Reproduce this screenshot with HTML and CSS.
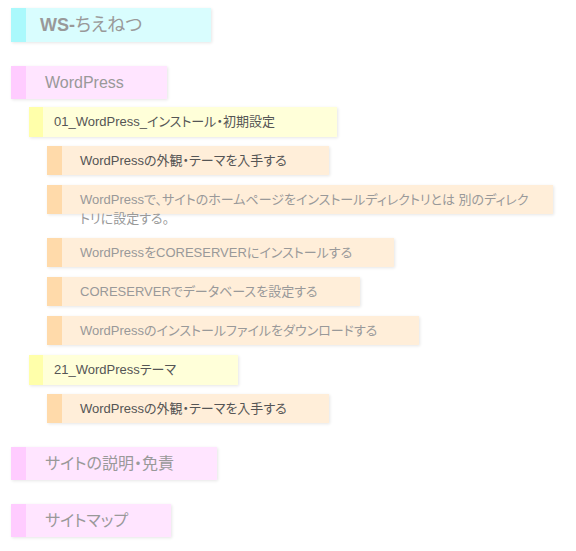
FILE: index.html
```html
<!DOCTYPE html>
<html lang="ja">
<head>
  <meta charset="UTF-8">
  <meta name="viewport" content="width=device-width, initial-scale=1">
  <title>WS-ちえねつ</title>
  <link rel="stylesheet" href="styles.css">
</head>
<body>
  <div class="page">
    <h1 class="site-title"><b>WS-</b>ちえねつ</h1>

    <ul class="tree">
      <li class="cat">
        <a class="box box-cat" href="#">WordPress</a>
        <ul class="subs">
          <li class="sub">
            <a class="box box-sub" href="#">01_WordPress_インストール・初期設定</a>
            <ul class="leaves">
              <li><a class="box box-leaf current" href="#">WordPressの外観・テーマを入手する</a></li>
              <li><a class="box box-leaf long" href="#">WordPressで、サイトのホームページをインストールディレクトリとは 別のディレクトリに設定する。</a></li>
              <li><a class="box box-leaf" href="#">WordPressをCORESERVERにインストールする</a></li>
              <li><a class="box box-leaf" href="#">CORESERVERでデータベースを設定する</a></li>
              <li><a class="box box-leaf" href="#">WordPressのインストールファイルをダウンロードする</a></li>
            </ul>
          </li>
          <li class="sub">
            <a class="box box-sub" href="#">21_WordPressテーマ</a>
            <ul class="leaves">
              <li><a class="box box-leaf current" href="#">WordPressの外観・テーマを入手する</a></li>
            </ul>
          </li>
        </ul>
      </li>
      <li class="cat">
        <a class="box box-cat" href="#">サイトの説明・免責</a>
      </li>
      <li class="cat">
        <a class="box box-cat" href="#">サイトマップ</a>
      </li>
    </ul>
  </div>
</body>
</html>
```

FILE: styles.css
```css
/* 全体 */
* {
  box-sizing: border-box;
  margin: 0;
  padding: 0;
}
body {
  font-family: "Liberation Sans", "Noto Sans CJK JP", sans-serif;
  font-feature-settings: "palt";
  color: #999;
  background: #fff;
}
.page {
  padding: 8px 11px;
}
a {
  text-decoration: none;
  color: inherit;
}
ul {
  list-style: none;
}

/* 共通の箱 */
.box {
  display: inline-block;
  box-shadow: 1px 1px 3px rgba(0, 0, 0, 0.1);
}

/* サイト名 */
.site-title {
  display: inline-block;
  height: 34px;
  padding: 6px 69px 0 14px;
  font-size: 18px;
  font-weight: normal;
  line-height: 22px;
  background: #d9fdfe;
  border-left: 15px solid #aaf9fc;
  box-shadow: 1px 1px 3px rgba(0, 0, 0, 0.1);
  margin-bottom: 24px;
}
.site-title b {
  font-weight: bold;
}

/* カテゴリ */
.tree {
  display: flex;
  flex-direction: column;
  align-items: flex-start;
  gap: 24px;
}
.cat {
  display: flex;
  flex-direction: column;
  align-items: flex-start;
}
.box-cat {
  height: 33px;
  padding: 6px 43px 0 19px;
  font-size: 16px;
  line-height: 21px;
  background: #ffe5ff;
  border-left: 15px solid #ffccff;
}

/* サブカテゴリ */
.subs {
  display: flex;
  flex-direction: column;
  align-items: flex-start;
  gap: 10px;
  margin-top: 8px;
  padding-left: 18px;
}
.sub {
  display: flex;
  flex-direction: column;
  align-items: flex-start;
}
.box-sub {
  height: 30px;
  padding: 5px 62px 0 11px;
  font-size: 13px;
  line-height: 20px;
  color: #555;
  background: #ffffd9;
  border-left: 14px solid #ffffaa;
}

/* 記事 */
.leaves {
  display: flex;
  flex-direction: column;
  align-items: flex-start;
  gap: 10px;
  margin-top: 9px;
  padding-left: 18px;
}
.box-leaf {
  position: relative;
  isolation: isolate;
  max-width: 506px;
  min-height: 29px;
  padding: 5px 42px 0 33px;
  font-size: 13px;
  line-height: 19px;
  box-shadow: none;
}
.box-leaf.long {
  padding-right: 16px;
}
/* 背景は1行分の高さだけ */
.box-leaf::before {
  content: "";
  position: absolute;
  left: 0;
  top: 0;
  right: 0;
  height: 29px;
  background: #ffeed9;
  border-left: 15px solid #ffdaaa;
  box-shadow: 1px 1px 3px rgba(0, 0, 0, 0.1);
  z-index: -1;
}
.box-leaf.current {
  color: #555;
}
```
